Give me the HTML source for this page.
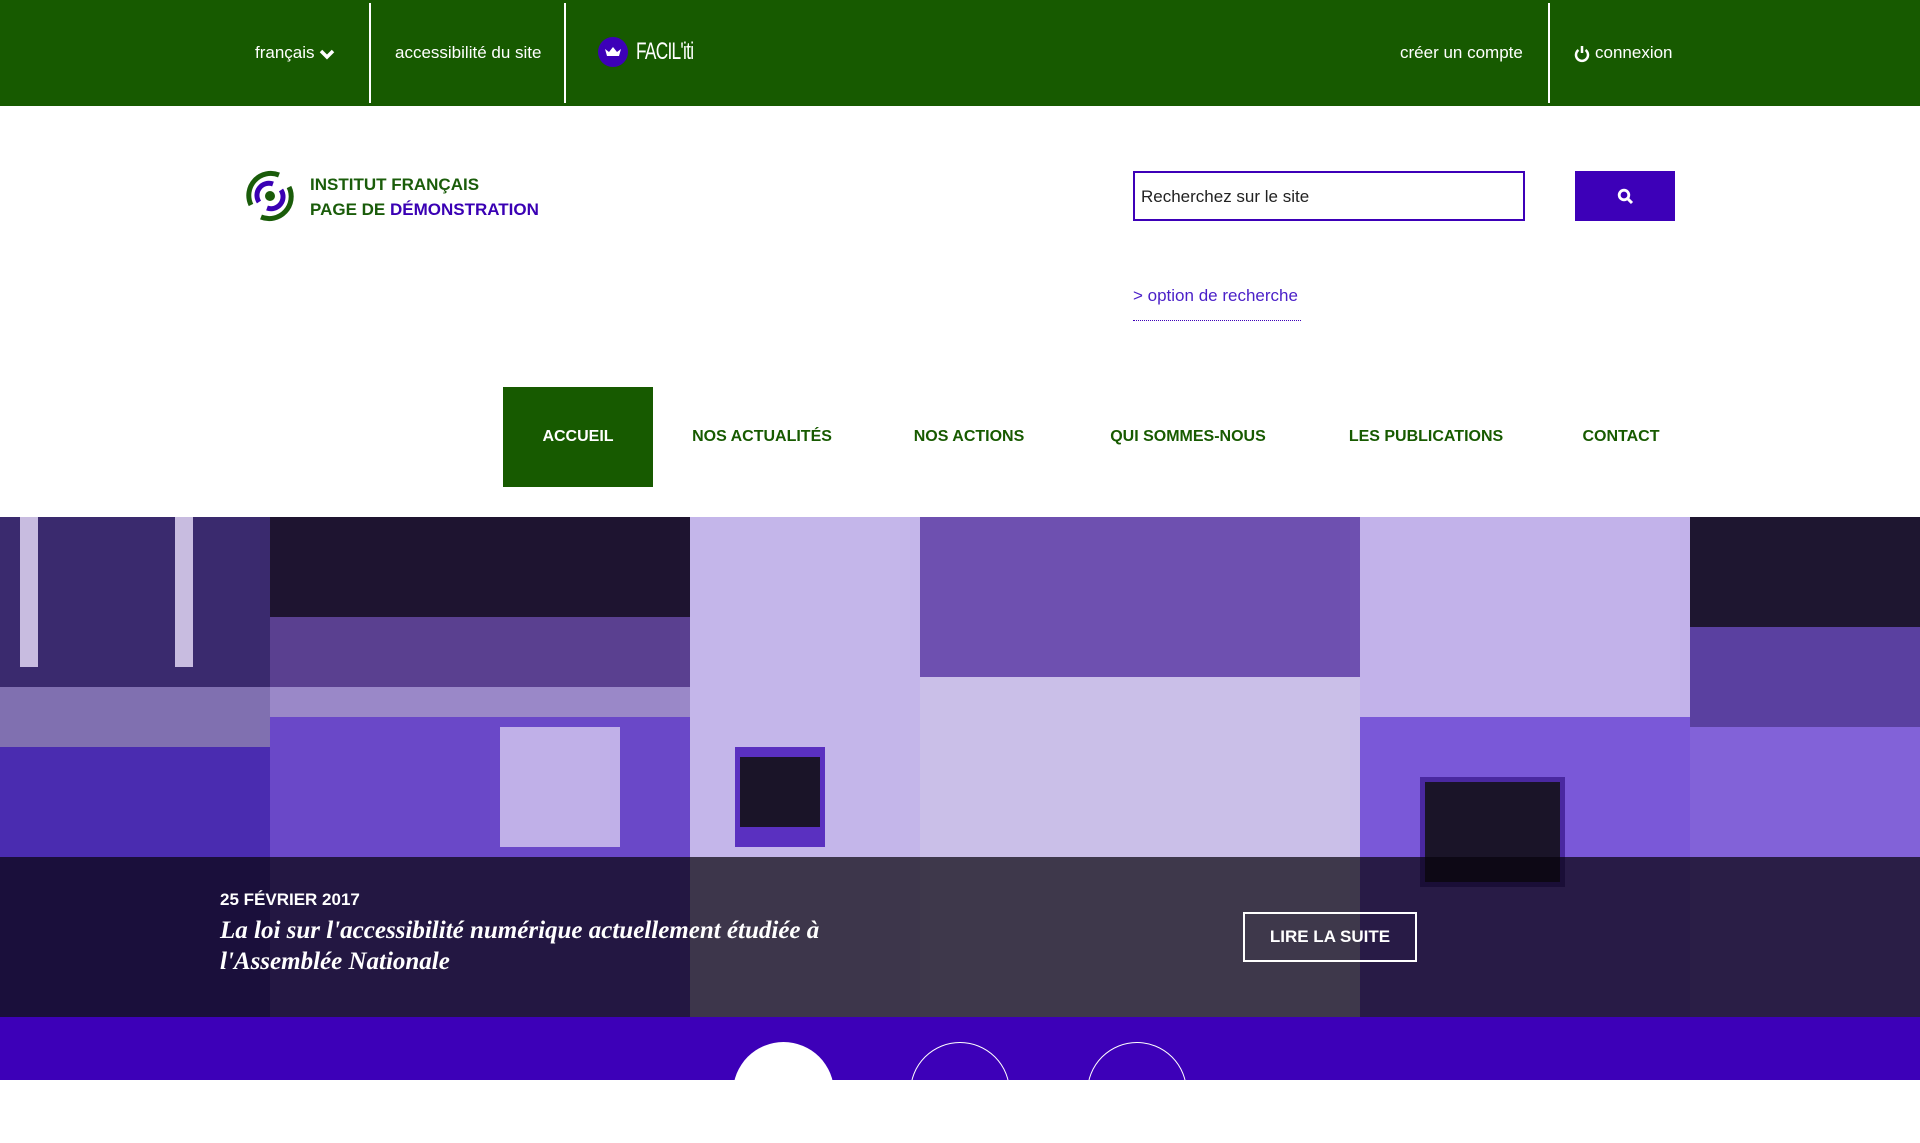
<!DOCTYPE html>
<html><head><meta charset="utf-8">
<style>
*{margin:0;padding:0;box-sizing:border-box}
body{width:1920px;height:1080px;overflow:hidden;background:#fff;font-family:"Liberation Sans",sans-serif;position:relative}
.abs{position:absolute}
.top{left:0;top:0;width:1920px;height:106px;background:#175a00;color:#fff;font-size:17px}
.top .t{position:absolute;top:43px;white-space:nowrap}
.sep{position:absolute;top:3px;width:2px;height:100px;background:#fff}
.nav{font-size:16px;font-weight:bold;color:#175a00;top:428px;position:absolute;white-space:nowrap;transform:translateX(-50%)}
.hero div{position:absolute}
</style></head><body>
<div class="abs top">
  <div class="t" style="left:255px">français <svg width="16" height="12" viewBox="0 0 16 12" style="vertical-align:middle"><path d="M2 3l6 6 6-6" stroke="#fff" stroke-width="3.5" fill="none"/></svg></div>
  <div class="sep" style="left:369px"></div>
  <div class="t" style="left:395px">accessibilité du site</div>
  <div class="sep" style="left:564px"></div>
  <svg class="abs" style="left:597px;top:36px" width="32" height="32" viewBox="0 0 32 32"><circle cx="16" cy="16" r="15" fill="#3d00b8"/><path d="M8 13l4 3 4-5 4 5 4-3-2 7H10z" fill="#fff"/></svg>
  <div class="t" style="left:636px;top:38px;font-size:24px;letter-spacing:-1px;transform:scaleX(0.72);transform-origin:left">FACIL'iti</div>
  <div class="t" style="left:1400px">créer un compte</div>
  <div class="sep" style="left:1548px"></div>
  <svg class="abs" style="left:1574px;top:45px" width="16" height="18" viewBox="0 0 16 18"><path d="M4.5 5a6 6 0 1 0 7 0" stroke="#fff" stroke-width="2.5" fill="none"/><path d="M8 1v7" stroke="#fff" stroke-width="2.5"/></svg>
  <div class="t" style="left:1595px">connexion</div>
</div>

<svg class="abs" style="left:243px;top:169px" width="54" height="54" viewBox="0 0 54 54">
<path d="M8 36A22 22 0 0 1 36 6" stroke="#1a5c0a" stroke-width="5" fill="none"/>
<path d="M46 18A22 22 0 0 1 18 48" stroke="#1a5c0a" stroke-width="5" fill="none"/>
<path d="M16 33A12 12 0 0 1 30 15" stroke="#3a00b4" stroke-width="5" fill="none"/>
<path d="M38 21A12 12 0 0 1 24 39" stroke="#3a00b4" stroke-width="5" fill="none"/>
<circle cx="27" cy="27" r="5" fill="#1a5c0a"/></svg>
<div class="abs" style="left:310px;top:172px;font-size:17px;font-weight:bold;color:#1a5c0a;line-height:25px">INSTITUT FRANÇAIS<br>PAGE DE <span style="color:#3a00b4">DÉMONSTRATION</span></div>

<div class="abs" style="left:1133px;top:171px;width:392px;height:50px;border:2px solid #3d00b8;font-size:17px;color:#222;padding:14px 6px">Recherchez sur le site</div>
<div class="abs" style="left:1575px;top:171px;width:100px;height:50px;background:#3d00b8"><svg style="margin:17px 0 0 42px" width="17" height="17" viewBox="0 0 17 17"><circle cx="7" cy="7" r="4.8" stroke="#fff" stroke-width="2.8" fill="none"/><path d="M10.5 10.5l4.5 4.5" stroke="#fff" stroke-width="3"/></svg></div>
<div class="abs" style="left:1133px;top:286px;font-size:17px;color:#4a1fc8">&gt; option de recherche</div>
<div class="abs" style="left:1133px;top:320px;width:168px;border-top:1px dotted #3d00b8"></div>

<div class="abs" style="left:503px;top:387px;width:150px;height:100px;background:#175a00"></div>
<div class="nav" style="left:578px;color:#fff">ACCUEIL</div>
<div class="nav" style="left:762px">NOS ACTUALITÉS</div>
<div class="nav" style="left:969px">NOS ACTIONS</div>
<div class="nav" style="left:1188px">QUI SOMMES-NOUS</div>
<div class="nav" style="left:1426px">LES PUBLICATIONS</div>
<div class="nav" style="left:1621px">CONTACT</div>

<div class="abs hero" style="left:0;top:517px;width:1920px;height:500px;overflow:hidden;background:#6a48c8">
  <div style="left:0;top:0;width:270px;height:170px;background:#3a2a6e"></div>
  <div style="left:0;top:170px;width:270px;height:60px;background:#8070b0"></div>
  <div style="left:0;top:230px;width:270px;height:270px;background:#4a2cb0"></div>
  <div style="left:20px;top:0;width:18px;height:150px;background:#c8bce0"></div>
  <div style="left:175px;top:0;width:18px;height:150px;background:#c8bce0"></div>
  <div style="left:270px;top:0;width:420px;height:100px;background:#1e1430"></div>
  <div style="left:270px;top:100px;width:420px;height:70px;background:#5a4090"></div>
  <div style="left:270px;top:170px;width:420px;height:30px;background:#9a88c8"></div>
  <div style="left:270px;top:200px;width:420px;height:300px;background:#6a48c8"></div>
  <div style="left:500px;top:210px;width:120px;height:120px;background:#c0b0e8"></div>
  <div style="left:690px;top:0;width:230px;height:500px;background:#c4b6ea"></div>
  <div style="left:735px;top:230px;width:90px;height:100px;background:#5a30c0"></div>
  <div style="left:740px;top:240px;width:80px;height:70px;background:#1a1428"></div>
  <div style="left:920px;top:0;width:440px;height:160px;background:#6e50b0"></div>
  <div style="left:920px;top:160px;width:440px;height:340px;background:#cabfe8"></div>
  <div style="left:1360px;top:0;width:330px;height:200px;background:#c2b2ea"></div>
  <div style="left:1360px;top:200px;width:330px;height:300px;background:#7a58d8"></div>
  <div style="left:1420px;top:260px;width:145px;height:110px;background:#1a1428;border:5px solid #4a28a0"></div>
  <div style="left:1690px;top:0;width:230px;height:110px;background:#1e1630"></div>
  <div style="left:1690px;top:110px;width:230px;height:100px;background:#5a40a0"></div>
  <div style="left:1690px;top:210px;width:230px;height:290px;background:#8262d8"></div>
  <div style="left:0;top:340px;width:1920px;height:160px;background:rgba(8,4,14,0.72)"></div>
</div>
<div class="abs" style="left:220px;top:890px;font-size:17px;font-weight:bold;color:#fff">25 FÉVRIER 2017</div>
<div class="abs" style="left:220px;top:915px;font-family:'Liberation Serif',serif;font-style:italic;font-weight:bold;font-size:25px;line-height:31px;color:#fff;white-space:nowrap">La loi sur l'accessibilité numérique actuellement étudiée à<br>l'Assemblée Nationale</div>
<div class="abs" style="left:1243px;top:912px;width:174px;height:50px;border:2px solid #fff;color:#fff;font-size:17px;font-weight:bold;text-align:center;line-height:46px">LIRE LA SUITE</div>

<div class="abs" style="left:0;top:1017px;width:1920px;height:63px;background:#3d00b8"></div>
<div class="abs" style="left:733px;top:1042px;width:101px;height:101px;border-radius:50%;background:#fff"></div>
<div class="abs" style="left:910px;top:1042px;width:100px;height:100px;border-radius:50%;border:1px solid #fff"></div>
<div class="abs" style="left:1087px;top:1042px;width:100px;height:100px;border-radius:50%;border:1px solid #fff"></div>
</body></html>
